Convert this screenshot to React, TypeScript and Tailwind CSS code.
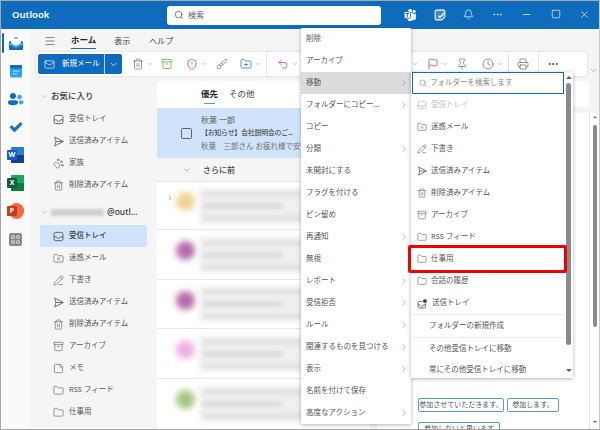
import {
  Archive,
  Bell,
  Brush,
  ChevronDown,
  ChevronRight,
  Clock,
  Flag,
  Folder,
  FolderPlus,
  FolderX,
  Mail,
  Menu,
  Minus,
  MoreHorizontal,
  PawPrint,
  PencilLine,
  Pin,
  Printer,
  Search,
  ShieldAlert,
  Square,
  StickyNote,
  Trash2,
  Undo2,
  X,
} from "lucide-react";
import type { ReactNode } from "react";

const InboxIcon = ({ size = 11, color = "#616161" }: { size?: number; color?: string }) => (
  <svg width={size} height={size} viewBox="0 0 16 16" fill="none" stroke={color} strokeWidth="1.4">
    <rect x="1.5" y="2" width="13" height="12" rx="2.5" />
    <path d="M1.5 8.5H5.2C5.6 10 6.6 10.7 8 10.7S10.4 10 10.8 8.5H14.5" />
  </svg>
);

const SendIcon = ({ size = 11 }: { size?: number }) => (
  <svg width={size} height={size} viewBox="0 0 16 16" fill="none" stroke="#616161" strokeWidth="1.3" strokeLinejoin="round">
    <path d="M2.5 1.5 15 8 2.5 14.5 4.3 8Z" />
    <path d="M4.3 8H15" />
  </svg>
);

const OutboxIcon = () => (
  <svg width="11" height="11" viewBox="0 0 16 16" fill="none" stroke="#616161" strokeWidth="1.3">
    <rect x="1.5" y="5" width="11" height="9.5" rx="2" />
    <path d="M1.5 10H4.5C5 11.4 6 12 7 12S9 11.4 9.5 10H12.5" />
    <circle cx="11.5" cy="4.5" r="3.5" fill="#424242" stroke="#fff" />
  </svg>
);

const RailIcons = [
  <svg key="mail" width="16" height="16" viewBox="0 0 16 16">
    <path d="M1 7 8 2l7 5v6.500a1.500 1.500 0 0 1-1.500 1.500h-11A1.500 1.500 0 0 1 1 13.500Z" fill="#0f6cbd" />
    <path d="M3 3.500h10v5L8 11 3 8.500Z" fill="#fff" />
    <path d="M1 7.500 8 11l7-3.500V10l-7 3-7-3Z" fill="#38a8e8" />
  </svg>,
  <svg key="cal" width="16" height="16" viewBox="0 0 16 16">
    <rect x="2" y="2" width="12" height="12.500" rx="1.500" fill="#2ea3f2" />
    <rect x="2" y="2" width="12" height="3.500" rx="1.200" fill="#0f6cbd" />
    <path d="M5 7.500h1.500V9H5Zm2.300 0h1.500V9H7.300Zm2.300 0h1.500V9H9.600ZM5 10.300h1.500v1.500H5Zm2.300 0h1.500v1.500H7.300Z" fill="#b5defa" />
  </svg>,
  <svg key="people" width="17" height="16" viewBox="0 0 17 16">
    <circle cx="6" cy="5" r="3" fill="#0f6cbd" />
    <circle cx="12.500" cy="6" r="2.300" fill="#38a8e8" />
    <path d="M1 11.500c0-1.500 1-2.300 2.300-2.300h5.400c1.300 0 2.300.8 2.300 2.300 0 1.800-2 2.800-5 2.800s-5-1-5-2.800Z" fill="#0f6cbd" />
    <path d="M12 9.500h2.500c1 0 2 .6 2 1.800 0 1.500-1.500 2.200-4 2.200Z" fill="#38a8e8" />
  </svg>,
  <svg key="check" width="16" height="16" viewBox="0 0 16 16">
    <path d="M1.500 8.300 3.800 6l2.700 2.700L12.300 3l2.300 2.300-8.100 8.100Z" fill="#1a73c8" />
  </svg>,
  <div key="word" className="relative w-[17px] h-[16px]">
    <div className="absolute right-0 top-0 w-[13px] h-[16px] bg-[#2b7cd3] rounded-[1px]" />
    <div className="absolute right-0 top-[8px] w-[13px] h-[8px] bg-[#103f91] rounded-[1px]" />
    <div className="absolute left-0 top-[3px] w-[10px] h-[10px] bg-[#185abd] rounded-[1px] text-white text-[7px] leading-[10px] text-center font-bold">W</div>
  </div>,
  <div key="excel" className="relative w-[17px] h-[16px]">
    <div className="absolute right-0 top-0 w-[13px] h-[16px] bg-[#21a366] rounded-[1px]" />
    <div className="absolute right-0 top-[8px] w-[13px] h-[8px] bg-[#107c41] rounded-[1px]" />
    <div className="absolute left-0 top-[3px] w-[10px] h-[10px] bg-[#185c37] rounded-[1px] text-white text-[7px] leading-[10px] text-center font-bold">X</div>
  </div>,
  <div key="ppt" className="relative w-[17px] h-[16px]">
    <div className="absolute right-0 top-0 w-[15px] h-[16px] bg-[#ed6c47] rounded-full" />
    <div className="absolute left-0 top-[3px] w-[10px] h-[10px] bg-[#c43e1c] rounded-[1px] text-white text-[7px] leading-[10px] text-center font-bold">P</div>
  </div>,
  <div key="apps" className="w-[13px] h-[13px] bg-[#8a8a8a] rounded-[2px] grid grid-cols-2 gap-[1px] p-[2px]">
    <div className="rounded-full border border-[#dcdcdc]" />
    <div className="rounded-full border border-[#dcdcdc]" />
    <div className="rounded-full border border-[#dcdcdc]" />
    <div className="rounded-full border border-[#dcdcdc]" />
  </div>,
];

const favs: [ReactNode, string][] = [
  [<InboxIcon />, "受信トレイ"],
  [<SendIcon />, "送信済みアイテム"],
  [<PawPrint size={11} strokeWidth={1.4} color="#616161" />, "家族"],
  [<Trash2 size={11} strokeWidth={1.4} color="#616161" />, "削除済みアイテム"],
];

const folders: [ReactNode, string][] = [
  [<InboxIcon />, "受信トレイ"],
  [<FolderX size={11} strokeWidth={1.4} color="#616161" />, "迷惑メール"],
  [<PencilLine size={11} strokeWidth={1.4} color="#616161" />, "下書き"],
  [<SendIcon />, "送信済みアイテム"],
  [<Trash2 size={11} strokeWidth={1.4} color="#616161" />, "削除済みアイテム"],
  [<Archive size={11} strokeWidth={1.4} color="#616161" />, "アーカイブ"],
  [<StickyNote size={11} strokeWidth={1.4} color="#616161" />, "メモ"],
  [<Folder size={11} strokeWidth={1.4} color="#616161" />, "RSS フィード"],
  [<Folder size={11} strokeWidth={1.4} color="#616161" />, "仕事用"],
];

const menuItems: [string, boolean][] = [
  ["削除", false],
  ["アーカイブ", false],
  ["移動", true],
  ["フォルダーにコピー...", true],
  ["コピー", false],
  ["分類", true],
  ["未開封にする", false],
  ["フラグを付ける", false],
  ["ピン留め", false],
  ["再通知", true],
  ["無視", false],
  ["レポート", true],
  ["受信拒否", true],
  ["ルール", true],
  ["関連するものを見つける", true],
  ["表示", true],
  ["名前を付けて保存", false],
  ["高度なアクション", true],
];

const moveItems: [ReactNode, string][] = [
  [<FolderX size={10} strokeWidth={1.4} color="#616161" />, "迷惑メール"],
  [<PencilLine size={10} strokeWidth={1.4} color="#616161" />, "下書き"],
  [<SendIcon size={10} />, "送信済みアイテム"],
  [<Trash2 size={10} strokeWidth={1.4} color="#616161" />, "削除済みアイテム"],
  [<Archive size={10} strokeWidth={1.4} color="#616161" />, "アーカイブ"],
  [<Folder size={10} strokeWidth={1.4} color="#616161" />, "RSS フィード"],
  [<Folder size={10} strokeWidth={1.4} color="#616161" />, "仕事用"],
  [<Folder size={10} strokeWidth={1.4} color="#616161" />, "会話の履歴"],
  [<OutboxIcon />, "送信トレイ"],
];

const blurRows = [
  { h: "h-[48px]", avatar: "bg-[#f0d48f]" },
  { h: "h-[50px]", avatar: "bg-[#b56aa8]" },
  { h: "h-[49px]", avatar: "bg-[#b56aa8]" },
  { h: "h-[50px]", avatar: "bg-[#eeb0e0]" },
  { h: "h-[50px]", avatar: "bg-[#a3c77f]" },
];

function Tool({ icon, chevron, className }: { icon: ReactNode; chevron?: boolean; className: string }) {
  return (
    <div className={`flex items-center gap-[3px] shrink-0 ${className}`}>
      {icon}
      {chevron && <ChevronDown size={6} strokeWidth={2} color="#8a8a8a" />}
    </div>
  );
}

function NavRow({ icon, label, active }: { icon: ReactNode; label: string; active?: boolean }) {
  return (
    <div className={`h-[22px] mx-[10px] pl-[13px] flex items-center gap-[5px] rounded-[2px] text-[7.5px] ${active ? "bg-[#cfe4fa] font-medium text-[#333]" : "text-[#555]"}`}>
      <span className="w-[11px] flex justify-center shrink-0">{icon}</span>
      <span className="whitespace-nowrap">{label}</span>
    </div>
  );
}

export default function App() {
  return (
    <div className="relative w-[600px] h-[430px] overflow-hidden flex flex-col border border-[#a8a8a8] border-r-[#c8c8c8] bg-[#f5f5f5] font-['Noto_Sans','Noto_Sans_CJK_JP',sans-serif]">
      {/* title bar */}
      <div className="h-[28px] shrink-0 bg-[#0f6cbd] flex items-center">
        <div className="w-[166px] pl-[11px] text-white text-[9.5px] font-semibold">Outlook</div>
        <div className="w-[214px] h-[19px] bg-white rounded-[3px] flex items-center pl-[7px] gap-[4px] text-[8px] text-[#616161]">
          <Search size={10} strokeWidth={1.6} color="#424242" />
          検索
        </div>
        <div className="ml-auto flex text-white">
          <div className="w-[29px] flex justify-center">
            <svg width="13" height="12" viewBox="0 0 16 15">
              <circle cx="12.500" cy="3" r="2" fill="#dfeaf6" />
              <path d="M9 6h6v5a3 3 0 0 1-6 0Z" fill="#dfeaf6" />
              <circle cx="7.500" cy="2.500" r="2.500" fill="#fff" />
              <path d="M4 5h7v6.500a3.500 3.500 0 0 1-7 0Z" fill="#fff" />
              <rect x="0" y="3.500" width="8" height="8" rx="1" fill="#fff" stroke="#0f6cbd" />
              <path d="M2 5.500h4M4 5.500v4.500" stroke="#0f6cbd" strokeWidth="1.300" />
            </svg>
          </div>
          <div className="w-[29px] flex justify-center">
            <svg width="12" height="12" viewBox="0 0 16 16" fill="none" stroke="#fff" strokeWidth="1.400">
              <path d="M3.500 1.500h9A2 2 0 0 1 14.500 3.500v7l-4 4h-7a2 2 0 0 1-2-2v-9a2 2 0 0 1 2-2Z" fill="#ffffff33" />
              <path d="m6 9 2 2 6-6" strokeWidth="1.800" />
            </svg>
          </div>
          <div className="w-[29px] flex justify-center"><Bell size={11} strokeWidth={1.5} /></div>
          <div className="w-[29px] flex justify-center"><MoreHorizontal size={11} strokeWidth={1.5} /></div>
          <div className="w-[29px] flex justify-center"><Minus size={11} strokeWidth={1.5} /></div>
          <div className="w-[29px] flex justify-center"><Square size={10} strokeWidth={1.5} /></div>
          <div className="w-[29px] flex justify-center"><X size={11} strokeWidth={1.5} /></div>
        </div>
      </div>

      <div className="flex-1 flex min-h-0">
        {/* app rail */}
        <div className="relative w-[29px] shrink-0 bg-[#fafafa] flex flex-col items-center pt-[6px] gap-[12px]">
          <div className="absolute left-[1px] top-[4px] w-[1.500px] h-[20px] bg-[#0f6cbd] rounded-full" />
          {RailIcons.map((icon, i) => (
            <div key={i} className="h-[16px] flex items-center justify-center">{icon}</div>
          ))}
        </div>

        <div className="flex-1 min-w-0 flex flex-col">
          {/* ribbon tabs */}
          <div className="h-[23px] shrink-0 flex items-center text-[8px] text-[#424242]">
            <Menu size={12} strokeWidth={1.3} color="#424242" className="ml-[14px]" />
            <div className="relative ml-[15px] h-full flex items-center font-semibold text-[#242424] text-[8.500px]">
              ホーム
              <div className="absolute left-0 right-0 bottom-[3px] h-[1.500px] bg-[#0f6cbd]" />
            </div>
            <span className="ml-[18px]">表示</span>
            <span className="ml-[19px]">ヘルプ</span>
          </div>

          {/* toolbar */}
          <div className="flex items-center shrink-0">
            <div className="ml-[6px] w-[551px] h-[24px] bg-white rounded-[3px] shadow-[0_0_2px_rgba(0,0,0,0.2)] flex items-center px-[2px]">
              <div className="w-[84px] h-[20px] bg-[#0f6cbd] rounded-[2px] flex items-center text-white text-[7.500px] shrink-0">
                <div className="w-[67px] h-full flex items-center gap-[7px] pl-[6px] border-r border-[#b5d4ef]">
                  <Mail size={11} strokeWidth={1.4} />
                  <span className="whitespace-nowrap">新規メール</span>
                </div>
                <div className="flex-1 flex justify-center"><ChevronDown size={9} strokeWidth={2} /></div>
              </div>
              <Tool className="ml-[10px]" chevron icon={<Trash2 size={12} strokeWidth={1.3} color="#616161" />} />
              <Tool className="ml-[8px]" icon={<Archive size={12} strokeWidth={1.4} color="#5c9a3c" />} />
              <Tool className="ml-[13px]" chevron icon={<ShieldAlert size={12} strokeWidth={1.4} color="#c4314b" />} />
              <Tool className="ml-[9px]" icon={<Brush size={12} strokeWidth={1.3} color="#616161" />} />
              <Tool className="ml-[12px]" chevron icon={<FolderPlus size={12} strokeWidth={1.4} color="#0f6cbd" />} />
              <div className="ml-[5px] w-px h-[20px] bg-[#e0e0e0] shrink-0" />
              <Tool className="ml-[10px]" chevron icon={<Undo2 size={12} strokeWidth={1.6} color="#b146c2" />} />
              <div className="ml-auto flex items-center mr-[26px]">
                <ChevronDown size={6} strokeWidth={2} color="#8a8a8a" className="mr-[9px]" />
                <Tool className="" chevron icon={<Flag size={12} strokeWidth={1.4} color="#c4314b" />} />
                <Tool className="ml-[8px]" icon={<Pin size={12} strokeWidth={1.4} color="#2b88d8" />} />
                <Tool className="ml-[14px]" chevron icon={<Clock size={12} strokeWidth={1.3} color="#616161" />} />
                <div className="ml-[5px] w-px h-[20px] bg-[#e0e0e0]" />
                <Tool className="ml-[8px]" icon={<Printer size={12} strokeWidth={1.4} color="#616161" />} />
                <div className="ml-[9px] w-px h-[20px] bg-[#e0e0e0]" />
                <Tool className="ml-[8px]" icon={<MoreHorizontal size={12} strokeWidth={2} color="#424242" />} />
              </div>
            </div>
            <ChevronDown size={9} strokeWidth={1.5} color="#8a8a8a" className="ml-[2px] mt-[12px]" />
          </div>

          {/* panes */}
          <div className="flex-1 min-h-0 flex">
            {/* folder list */}
            <div className="w-[127px] shrink-0 pt-[9px]">
              <div className="h-[22px] mb-[1px] flex items-center pl-[11px] gap-[3px] text-[8.500px] font-medium text-[#333]">
                <ChevronDown size={7} strokeWidth={1.5} color="#8a8a8a" />
                お気に入り
              </div>
              {favs.map(([icon, label], i) => (
                <NavRow key={i} icon={icon} label={label} />
              ))}
              <div className="h-[22px] mt-[5px] mb-[2px] flex items-center pl-[11px] gap-[3px] text-[8.500px] font-medium text-[#333]">
                <ChevronDown size={7} strokeWidth={1.5} color="#8a8a8a" />
                <div className="w-[53px] h-[7px] bg-[#cfcfcf] blur-[1.500px]" />
                <span className="whitespace-nowrap">@outl...</span>
              </div>
              {folders.map(([icon, label], i) => (
                <NavRow key={i} icon={icon} label={label} active={i === 0} />
              ))}
            </div>

            {/* message list */}
            <div className="w-[213px] shrink-0 mt-[5px] bg-white rounded-t-[3px] overflow-hidden">
              <div className="h-[27px] flex items-center pl-[44px] text-[8.500px] text-[#424242]">
                <div className="relative font-semibold text-[#242424] h-full flex items-center">
                  優先
                  <div className="absolute left-[3px] right-[3px] bottom-[4px] h-[1.500px] bg-[#5a9bd5]" />
                </div>
                <span className="ml-[11px]">その他</span>
              </div>
              <div className="h-[50px] bg-[#cfe4fa] flex items-center pl-[24px] text-[8px]">
                <div className="w-[11px] h-[11px] border border-[#616161] rounded-[1.500px] shrink-0" />
                <div className="ml-[9px] w-[99px] overflow-hidden flex flex-col gap-[3px] whitespace-nowrap">
                  <div className="text-[#616161] leading-[10px]">秋葉 一郎</div>
                  <div className="text-[#333] leading-[10px] text-[7px] tracking-[-0.3px]">【お知らせ】会社説明会のご...</div>
                  <div className="text-[#707070] leading-[10px] text-[7.500px]">秋葉　三郎さん お疲れ様で安</div>
                </div>
              </div>
              <div className="h-[23px] bg-[#f5f5f5] flex items-center pl-[26px] gap-[12px] text-[8px] text-[#424242] font-medium">
                <ChevronDown size={8} strokeWidth={1.5} color="#707070" />
                さらに前
              </div>
              {blurRows.map((r, i) => (
                <div key={i} className={`${r.h} flex items-center border-t border-[#e8e8e8] pl-[19px] relative`}>
                  <div className={`w-[19px] h-[19px] mb-[8px] rounded-full blur-[3px] ${r.avatar}`} />
                  <div className="ml-[4px] w-[165px] h-[36px] bg-[#f0f0f0] blur-[2.500px] flex flex-col justify-around px-[4px]">
                    <div className="h-[4px] w-[85%] bg-[#dcdcdc]" />
                    <div className="h-[4px] w-[50%] bg-[#d0d0d0]" />
                    <div className="h-[4px] w-[90%] bg-[#dcdcdc]" />
                  </div>
                  {i === 0 && <ChevronRight size={8} strokeWidth={1.5} color="#707070" className="absolute left-[9px] top-[12px]" />}
                </div>
              ))}
            </div>

            {/* reading pane */}
            <div className="ml-[7px] flex-1 min-w-0 mt-[5px] flex flex-col gap-[6px]">
              <div className="h-[26px] mr-[10px] bg-white rounded-[3px] shrink-0" />
              <div className="flex-1 min-h-0 bg-white rounded-t-[3px] overflow-hidden flex">
                <div className="flex-1 pl-[41px] pt-[285px] text-[7px] text-[#555]">
                  <div className="flex gap-[3px]">
                    <div className="w-[86px] h-[14px] border border-[#5a9bd5] rounded-[2px] flex items-center justify-center whitespace-nowrap">参加させていただきます。</div>
                    <div className="w-[52px] h-[14px] border border-[#5a9bd5] rounded-[2px] flex items-center justify-center whitespace-nowrap">参加します。</div>
                  </div>
                  <div className="mt-[10px] w-[82px] h-[14px] border border-[#5a9bd5] rounded-[2px] flex items-center justify-center whitespace-nowrap">参加しないと思います</div>
                </div>
                <div className="relative w-[10px] shrink-0 border-l border-[#e0e0e0] flex flex-col items-center">
                  <div className="mt-[3px] w-0 h-0 border-x-[2px] border-x-transparent border-b-[2px] border-b-[#616161]" />
                  <div className="mt-[7px] w-[4px] h-[202px] rounded-full bg-[#8a8a8a]" />
                  <div className="mt-auto mb-[6px] w-0 h-0 border-x-[2px] border-x-transparent border-t-[2px] border-t-[#616161]" />
                </div>
              </div>
            </div>
          </div>
        </div>
      </div>

      {/* context menu */}
      <div className="absolute left-[300px] top-[27px] w-[110px] bg-white shadow-[0_1px_4px_rgba(0,0,0,0.3)] text-[7.500px] text-[#555]">
        {menuItems.map(([label, sub], i) => (
          <div key={i} className={`h-[22px] flex items-center justify-between pl-[5px] pr-[2px] whitespace-nowrap ${i === 2 ? "bg-[#dcdcdc]" : ""}`}>
            {label}
            {sub && <ChevronRight size={10} strokeWidth={1.2} color="#707070" />}
          </div>
        ))}
      </div>

      {/* move submenu */}
      <div className="absolute left-[410px] top-[71px] w-[162px] h-[306px] bg-white shadow-[0_1px_4px_rgba(0,0,0,0.3)] overflow-hidden flex text-[7.500px] text-[#555]">
        <div className="w-[153px] pl-[1px] shrink-0">
          <div className="h-[22px] border-[1.500px] border-[#0f6cbd] flex items-center pl-[6px] gap-[3px] text-[#8a8a8a]">
            <Search size={8} strokeWidth={1.6} color="#707070" />
            フォルダーを検索します
          </div>
          <div className="h-[22px] flex items-center pl-[5px] gap-[4px] text-[#c4c4c4]">
            <InboxIcon size={10} color="#c4c4c4" />
            受信トレイ
          </div>
          {moveItems.map(([icon, label], i) => (
            <div key={i} className="h-[22px] flex items-center pl-[5px] gap-[4px]">
              {icon}
              {label}
            </div>
          ))}
          <div className="h-[23px] border-t border-[#ececec] flex items-center pl-[17px] box-border">フォルダーの新規作成</div>
          <div className="h-[22px] border-t border-[#ececec] flex items-center pl-[17px]">その他受信トレイに移動</div>
          <div className="h-[22px] flex items-center pl-[17px]">常にその他受信トレイに移動</div>
        </div>
        <div className="flex-1 flex flex-col items-center">
          <div className="mt-[4px] w-0 h-0 border-x-[3px] border-x-transparent border-b-[3px] border-b-[#616161]" />
          <div className="mt-[4px] w-[5px] h-[262px] rounded-full bg-[#8a8a8a]" />
          <div className="mt-[24px] w-0 h-0 border-x-[3px] border-x-transparent border-t-[3px] border-t-[#616161]" />
        </div>
      </div>

      {/* callout */}
      <div className="absolute left-[407px] top-[244px] w-[159px] h-[28px] border-[3px] border-[#f00000] rounded-[2px]" />
    </div>
  );
}
